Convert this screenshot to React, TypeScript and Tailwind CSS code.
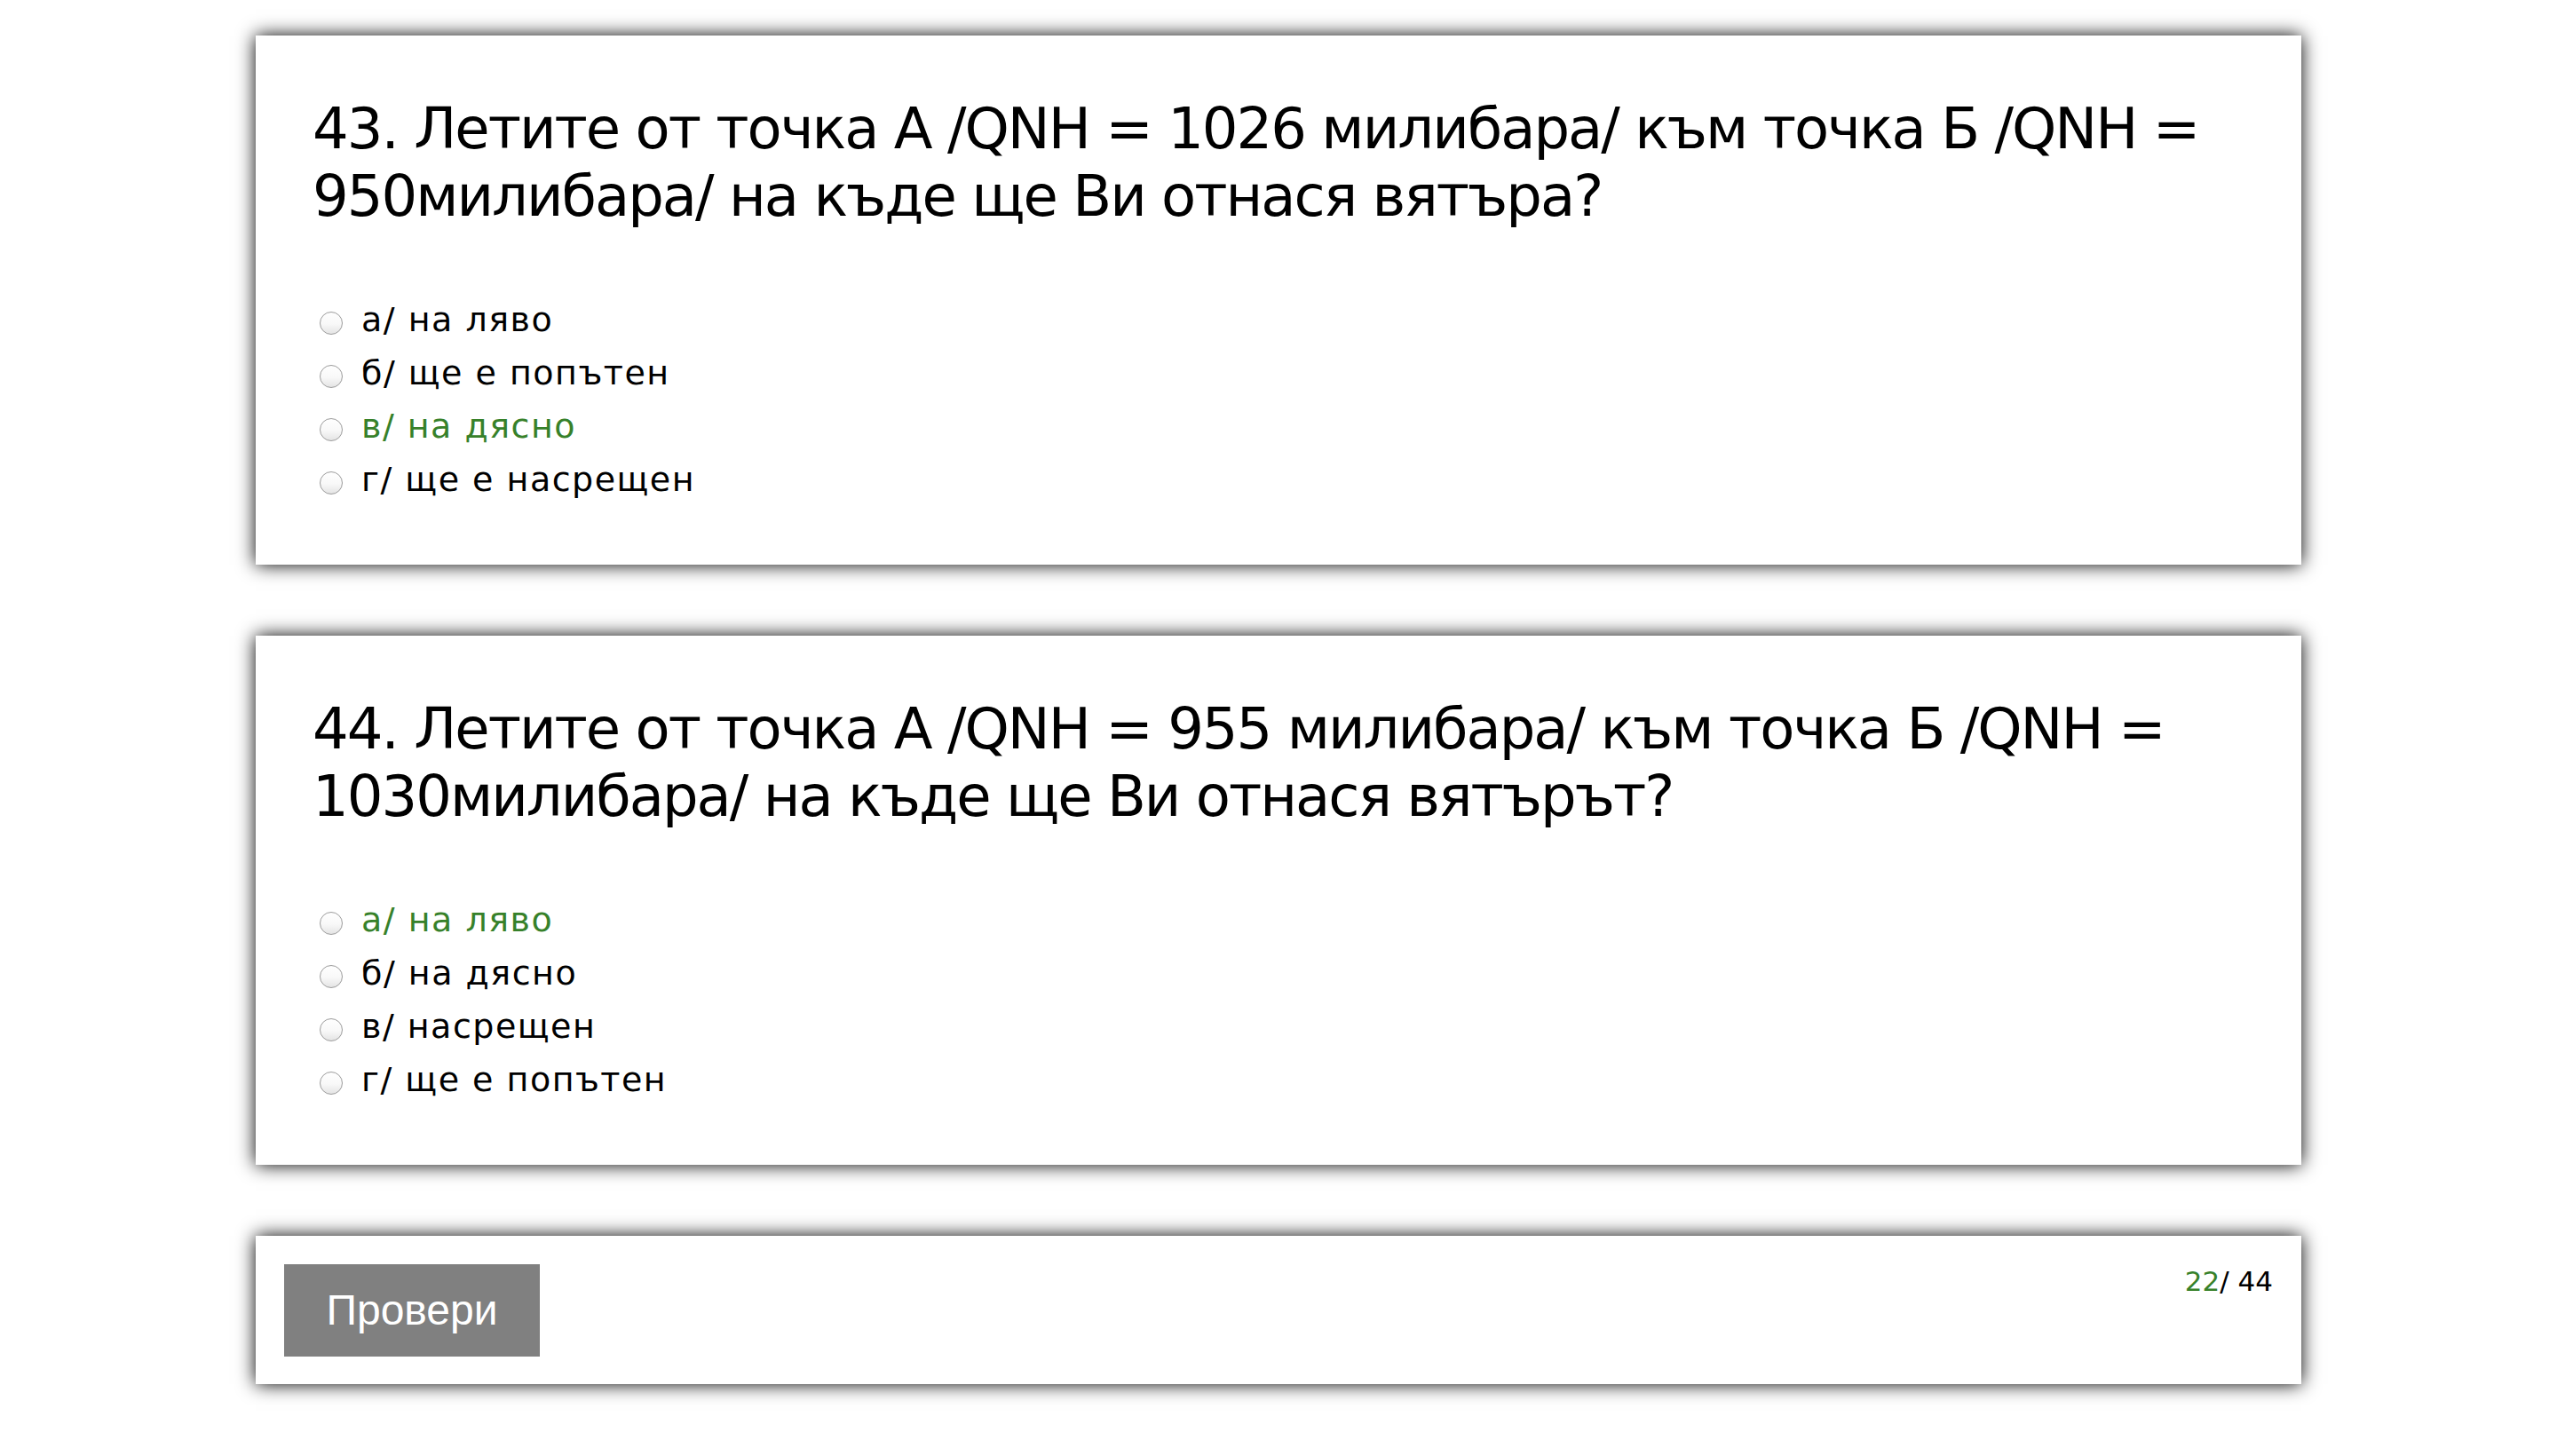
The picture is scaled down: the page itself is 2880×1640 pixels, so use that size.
import React from "react";

type Opt = { text: string; correct?: boolean };
type Q = { title: string; options: Opt[] };

const questions: Q[] = [
  {
    title:
      "43. Летите от точка А /QNH = 1026 милибара/ към точка Б /QNH = 950милибара/ на къде ще Ви отнася вятъра?",
    options: [
      { text: "а/ на ляво" },
      { text: "б/ ще е попътен" },
      { text: "в/ на дясно", correct: true },
      { text: "г/ ще е насрещен" },
    ],
  },
  {
    title:
      "44. Летите от точка А /QNH = 955 милибара/ към точка Б /QNH = 1030милибара/ на къде ще Ви отнася вятърът?",
    options: [
      { text: "а/ на ляво", correct: true },
      { text: "б/ на дясно" },
      { text: "в/ насрещен" },
      { text: "г/ ще е попътен" },
    ],
  },
];

function Radio() {
  return (
    <span className="mt-[8px] ml-2 h-[26px] w-[26px] shrink-0 rounded-full border-[1.5px] border-[#9c9c9c] bg-[linear-gradient(180deg,#ffffff_0%,#f8f8f8_55%,#e4e4e4_100%)]" />
  );
}

function Card({ q }: { q: Q }) {
  return (
    <div className="w-[80%] bg-white pt-[67px] px-16 pb-[66px] shadow-[0_0_20px_0_rgba(0,0,0,1)]">
      <h3 className="text-[64px] leading-[76px] tracking-[-2px] text-black font-['DejaVu_Sans',sans-serif]">
        {q.title}
      </h3>
      <ul className="mt-[71px] flex flex-col">
        {q.options.map((o, i) => (
          <li key={i} className="flex h-[60px] items-center gap-[21px]">
            <Radio />
            <span
              className={
                "text-[38px] leading-[60px] tracking-[1.5px] font-['DejaVu_Sans',sans-serif] " +
                (o.correct ? "text-[#37812a]" : "text-black")
              }
            >
              {o.text}
            </span>
          </li>
        ))}
      </ul>
    </div>
  );
}

export default function App() {
  return (
    <div className="min-h-[1640px] w-full bg-white flex flex-col items-center gap-20 pt-10">
      {questions.map((q, i) => (
        <Card key={i} q={q} />
      ))}
      <div className="w-[80%] bg-white p-8 pb-[31px] flex items-start justify-between shadow-[0_0_20px_0_rgba(0,0,0,1)]">
        <button className="h-[104px] w-[288px] bg-[#808080] text-white text-[48px] font-['Liberation_Sans',Arial,sans-serif]">
          Провери
        </button>
        <div className="text-[31px] leading-[38px] font-['DejaVu_Sans',sans-serif] text-black">
          <span className="text-[#37812a]">22</span>/ 44
        </div>
      </div>
    </div>
  );
}
